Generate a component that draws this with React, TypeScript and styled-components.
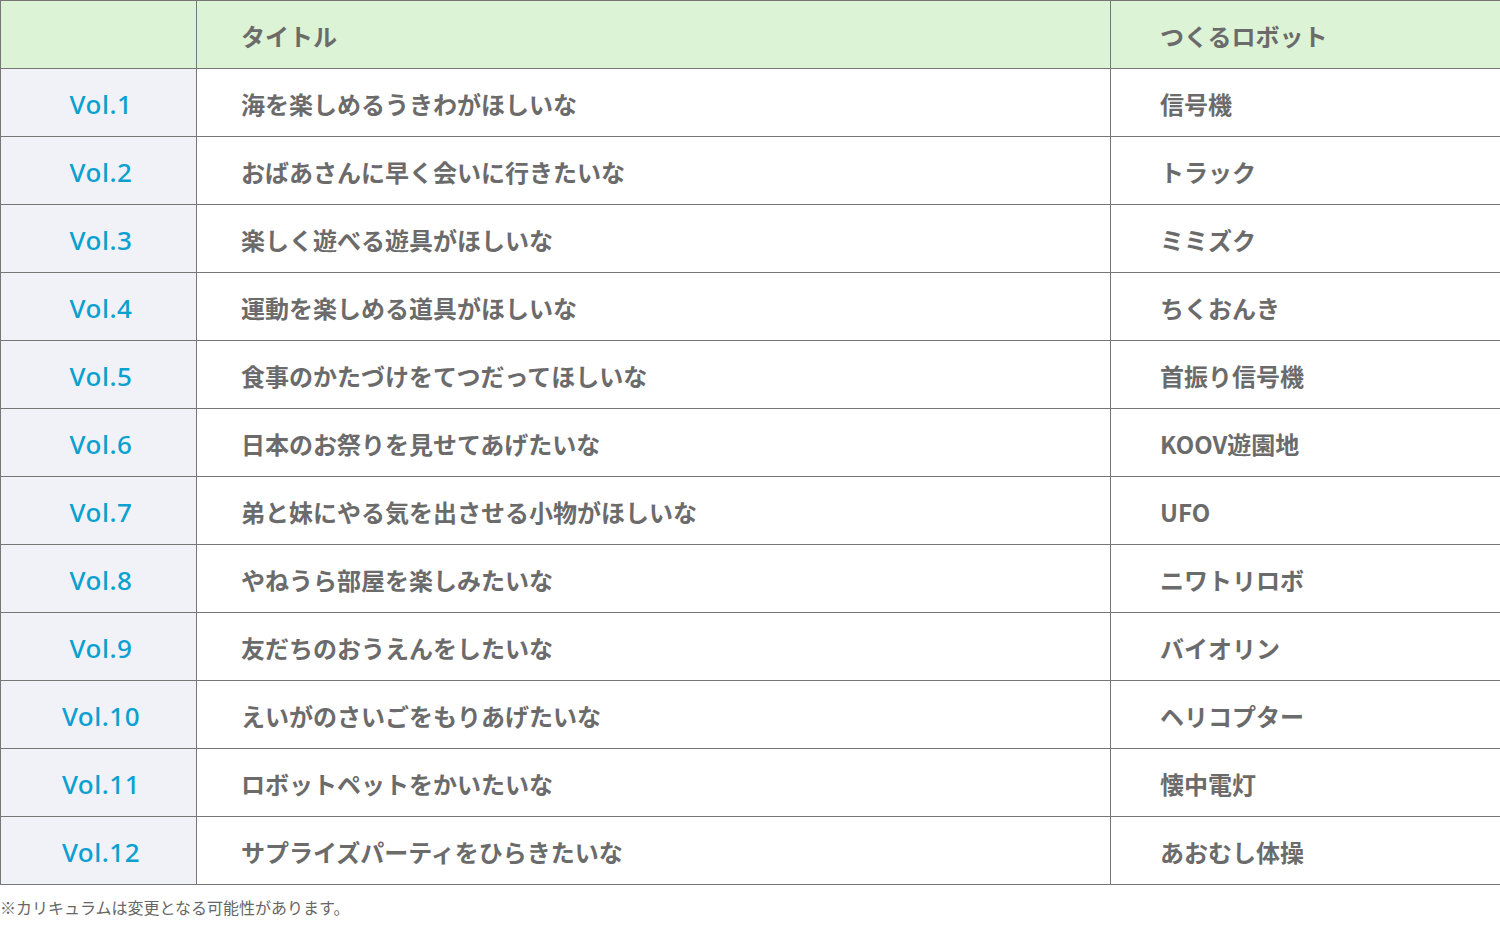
import React from "react";
import styled, { createGlobalStyle } from "styled-components";

const GlobalStyle = createGlobalStyle`
  html, body { margin: 0; padding: 0; background: #ffffff; }
  body { font-family: "Noto Sans CJK JP", "Noto Sans", sans-serif; color: #666666; }
`;

const Wrapper = styled.div`
  width: 1500px;
`;

const Table = styled.table`
  width: 1500px;
  border-collapse: collapse;
  table-layout: fixed;
`;

const HeadCell = styled.th<{ $pad?: number }>`
  height: 65px;
  padding: 2px 0 0 ${(p) => p.$pad ?? 0}px;
  background: #ddf3d6;
  border: 1px solid #777777;
  text-align: left;
  font-size: 24px;
  font-weight: 600;
  color: #6b6b6b;
`;

const VolCell = styled.td`
  height: 65px;
  padding: 2px 0 0 5px;
  background: #f1f2f7;
  border: 1px solid #777777;
  text-align: center;
  font-family: "Noto Sans", "Noto Sans CJK JP", sans-serif;
  font-size: 26px;
  font-weight: 500;
  letter-spacing: 0.5px;
  color: #0aa0cf;
`;

const TextCell = styled.td<{ $pad: number }>`
  height: 65px;
  padding: 2px 0 0 ${(p) => p.$pad}px;
  background: #ffffff;
  border: 1px solid #777777;
  text-align: left;
  font-size: 24px;
  font-weight: 600;
  color: #6b6b6b;
`;

const Note = styled.p`
  margin: 10px 0 0 0;
  font-size: 16px;
  font-weight: 400;
  color: #666666;
`;

const rows: [string, string, string][] = [
  ["Vol.1", "海を楽しめるうきわがほしいな", "信号機"],
  ["Vol.2", "おばあさんに早く会いに行きたいな", "トラック"],
  ["Vol.3", "楽しく遊べる遊具がほしいな", "ミミズク"],
  ["Vol.4", "運動を楽しめる道具がほしいな", "ちくおんき"],
  ["Vol.5", "食事のかたづけをてつだってほしいな", "首振り信号機"],
  ["Vol.6", "日本のお祭りを見せてあげたいな", "KOOV遊園地"],
  ["Vol.7", "弟と妹にやる気を出させる小物がほしいな", "UFO"],
  ["Vol.8", "やねうら部屋を楽しみたいな", "ニワトリロボ"],
  ["Vol.9", "友だちのおうえんをしたいな", "バイオリン"],
  ["Vol.10", "えいがのさいごをもりあげたいな", "ヘリコプター"],
  ["Vol.11", "ロボットペットをかいたいな", "懐中電灯"],
  ["Vol.12", "サプライズパーティをひらきたいな", "あおむし体操"],
];

export default function App() {
  return (
    <>
      <GlobalStyle />
      <Wrapper>
        <Table>
          <colgroup>
            <col style={{ width: 196 }} />
            <col style={{ width: 914 }} />
            <col style={{ width: 390 }} />
          </colgroup>
          <thead>
            <tr>
              <HeadCell />
              <HeadCell $pad={44}>タイトル</HeadCell>
              <HeadCell $pad={49}>つくるロボット</HeadCell>
            </tr>
          </thead>
          <tbody>
            {rows.map(([vol, title, robot]) => (
              <tr key={vol}>
                <VolCell>{vol}</VolCell>
                <TextCell $pad={44}>{title}</TextCell>
                <TextCell $pad={49}>{robot}</TextCell>
              </tr>
            ))}
          </tbody>
        </Table>
        <Note>※カリキュラムは変更となる可能性があります。</Note>
      </Wrapper>
    </>
  );
}
